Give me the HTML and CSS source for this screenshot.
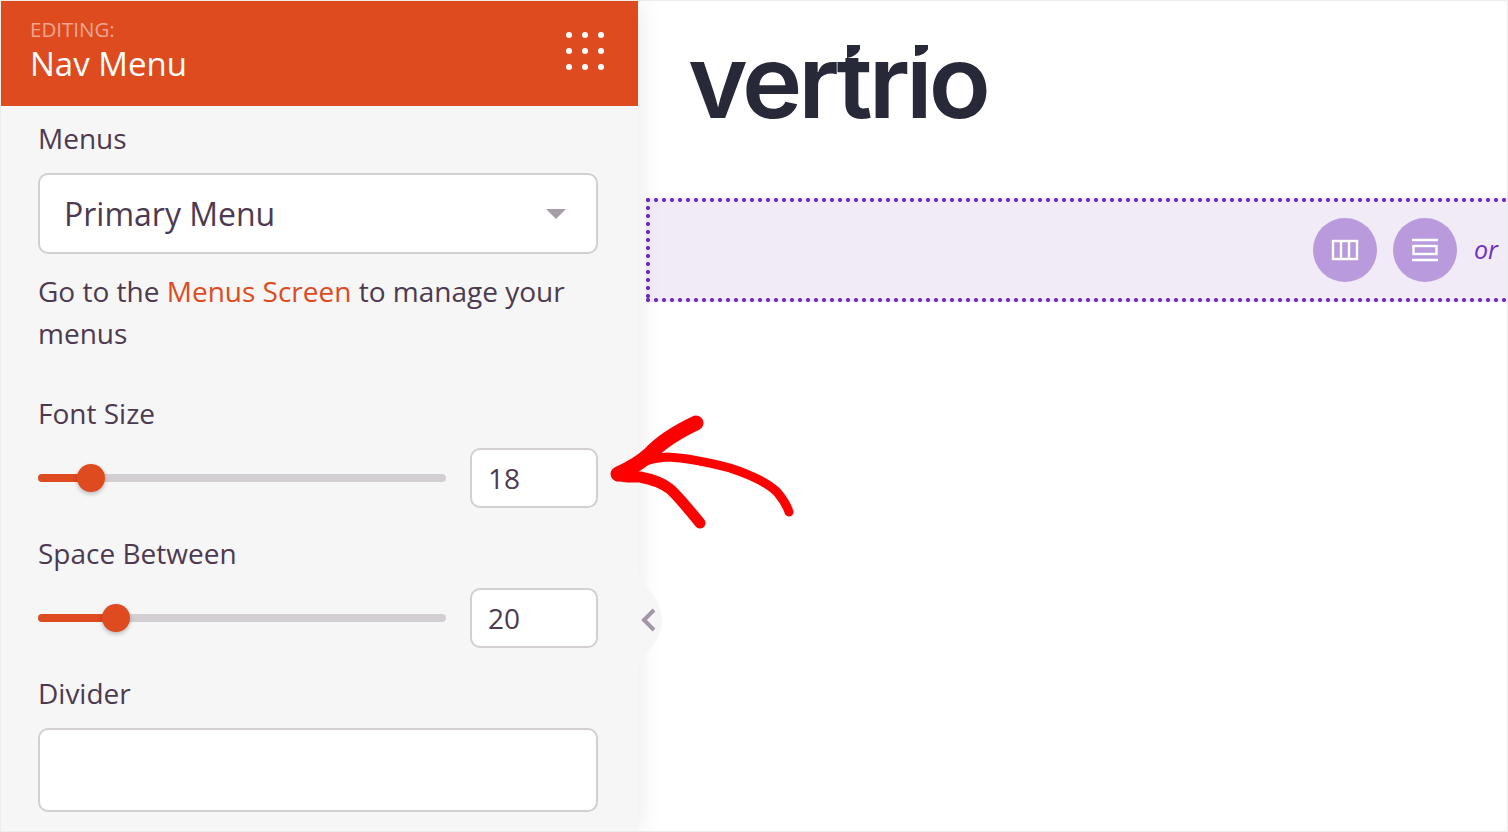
FILE: index.html
```html
<!DOCTYPE html>
<html>
<head>
  <meta charset="UTF-8">
  <title>Nav Menu</title>
  <link rel="stylesheet" href="styles.css">
</head>
<body>
  <div class="page">
    <aside class="sidebar">
      <header class="panel-head">
        <div>
          <div class="panel-eyebrow">EDITING:</div>
          <div class="panel-title">Nav Menu</div>
        </div>
        <svg class="panel-dots" width="38" height="38" viewBox="0 0 38 38" fill="#fff">
          <circle cx="3" cy="3" r="3"/><circle cx="19" cy="3" r="3"/><circle cx="35" cy="3" r="3"/>
          <circle cx="3" cy="19" r="3"/><circle cx="19" cy="19" r="3"/><circle cx="35" cy="19" r="3"/>
          <circle cx="3" cy="35" r="3"/><circle cx="19" cy="35" r="3"/><circle cx="35" cy="35" r="3"/>
        </svg>
      </header>

      <div class="panel-body">
        <div class="field field-first">
          <label>Menus</label>
          <div class="select-box">
            <span>Primary Menu</span>
            <span class="select-caret"></span>
          </div>
          <p class="help">Go to the <a href="#">Menus Screen</a> to manage your menus</p>
        </div>

        <div class="field field-size">
          <label>Font Size</label>
          <div class="slider-row">
            <div class="slider">
              <div class="slider-fill" style="width: 13%"><span class="slider-knob"></span></div>
            </div>
            <div class="num-box">18</div>
          </div>
        </div>

        <div class="field">
          <label>Space Between</label>
          <div class="slider-row">
            <div class="slider">
              <div class="slider-fill" style="width: 19.1%"><span class="slider-knob"></span></div>
            </div>
            <div class="num-box">20</div>
          </div>
        </div>

        <div class="field">
          <label>Divider</label>
          <div class="text-box"></div>
        </div>
      </div>

      <svg class="collapse-tab" width="26" height="104" viewBox="0 0 26 104">
        <path d="M0 0C0 16 24 28 24 52C24 76 0 88 0 104Z" fill="#f6f6f6"/>
        <path d="M16 42L6 52L16 62" fill="none" stroke="#a397a7" stroke-width="4"/>
      </svg>
    </aside>

    <main class="canvas">
      <div class="logo">
        vertrio
        <!-- slanted ticks of the wordmark, over the t and the i -->
        <svg class="logo-ticks" width="100" height="22" viewBox="0 0 100 22">
          <rect x="0" y="0" width="100" height="20" fill="#fff"/>
          <path d="M4 7H17V11C15 16 10 19 4 20Z" fill="#272838"/>
          <path d="M72 7H85V11C83 15 78 18 72 18Z" fill="#272838"/>
        </svg>
      </div>
      <div class="drop-zone">
        <span class="round-btn">
          <svg width="28" height="22" viewBox="0 0 28 22" fill="none" stroke="#fff" stroke-width="2.4">
            <rect x="2" y="2" width="24" height="18"/><path d="M10 2V20M18 2V20"/>
          </svg>
        </span>
        <span class="round-btn">
          <svg width="28" height="24" viewBox="0 0 28 24" fill="none" stroke="#fff" stroke-width="2.4">
            <path d="M1 2H27M1 22H27"/><rect x="2.5" y="8" width="23" height="8"/>
          </svg>
        </span>
        <em class="drop-or">or</em>
      </div>
    </main>

    <svg class="arrow" width="200" height="120" viewBox="0 0 200 120">
      <g fill="none" stroke="#fe0000" stroke-linecap="round" stroke-linejoin="round">
        <path d="M89 13C70 22 54 32 43 44C32 54 20 60 11 64" stroke-width="15"/>
        <path d="M11 63C26 54 42 48 60 47C82 48 104 53 123 58C144 65 160 72 170 82C176 89 180 96 182 102" stroke-width="9"/>
        <path d="M10 65C18 68 26 67 33 67C44 69 54 72 63 79C72 87 84 102 93 113" stroke-width="11"/>
      </g>
    </svg>
  </div>
</body>
</html>
```
FILE: styles.css
```css
* {
  box-sizing: border-box;
}

html, body {
  margin: 0;
  height: 100%;
  overflow: hidden;
  background: #fff;
}

body {
  font-family: "Open Sans", "Noto Sans", sans-serif;
  color: #4d3a50;
}

.page {
  position: relative;
  display: flex;
  height: 832px;
  border: 1px solid #ececec;
  overflow: hidden;
}

.sidebar {
  position: relative;
  z-index: 1;
  flex: 0 0 637px;
  background: #f6f6f6;
  box-shadow: 0 0 24px rgba(0, 0, 0, 0.1);
}

.panel-head {
  display: flex;
  justify-content: space-between;
  align-items: center;
  height: 105px;
  padding: 0 34px 6px 29px;
  background: #de4b1e;
  color: #fff;
}

.panel-eyebrow {
  font-size: 20.5px;
  line-height: 24px;
  color: rgba(255, 255, 255, 0.5);
}

.panel-title {
  margin-top: 1px;
  font-size: 33px;
  font-weight: 500;
  line-height: 43px;
}

.panel-body {
  padding: 0 40px 0 37px;
}

.field {
  margin-top: 30px;
}

.field-first {
  margin-top: 17px;
}

.field-size {
  margin-top: 44px;
}

label {
  display: block;
  height: 32px;
  margin-bottom: 18px;
  font-size: 28px;
  line-height: 30px;
}

.select-box {
  display: flex;
  justify-content: space-between;
  align-items: center;
  height: 81px;
  padding: 0 30px 1px 24px;
  background: #fff;
  border: 2px solid #d3ced2;
  border-radius: 10px;
  font-size: 32px;
}

.select-caret {
  width: 0;
  height: 0;
  margin-top: 2px;
  border-left: 10px solid transparent;
  border-right: 10px solid transparent;
  border-top: 10px solid #a79da9;
}

.help {
  margin: 16px 0 0;
  font-size: 28px;
  line-height: 42px;
}

.help a {
  color: #de4b1e;
  text-decoration: none;
}

.slider-row {
  display: flex;
  justify-content: space-between;
  align-items: center;
  height: 60px;
}

.slider {
  width: 408px;
  height: 8px;
  background: #d3ced2;
  border-radius: 4px;
}

.slider-fill {
  position: relative;
  height: 8px;
  background: #de4b1e;
  border-radius: 4px 0 0 4px;
}

.slider-knob {
  position: absolute;
  right: -14px;
  top: -10px;
  width: 28px;
  height: 28px;
  background: #de4b1e;
  border-radius: 50%;
  box-shadow: 0 2px 4px rgba(0, 0, 0, 0.25);
}

.num-box {
  display: flex;
  align-items: center;
  width: 128px;
  height: 60px;
  padding-left: 16px;
  background: #fff;
  border: 2px solid #d3ced2;
  border-radius: 10px;
  font-size: 28px;
}

.text-box {
  height: 84px;
  background: #fff;
  border: 2px solid #d3ced2;
  border-radius: 10px;
}

.collapse-tab {
  position: absolute;
  left: 637px;
  top: 567px;
}

.canvas {
  flex: 1;
  min-width: 0;
}

.logo {
  position: relative;
  height: 197px;
  padding: 16px 0 0 50px;
  font-family: Inter, "Liberation Sans", sans-serif;
  font-size: 102px;
  font-weight: 600;
  line-height: 128px;
  letter-spacing: -4px;
  color: #272838;
}

.logo-ticks {
  position: absolute;
  left: 205px;
  top: 37px;
}

.drop-zone {
  display: flex;
  justify-content: flex-end;
  align-items: center;
  gap: 16px;
  height: 104px;
  margin-left: 8px;
  margin-right: -4px;
  padding-right: 13px;
  background-color: #f1eaf7;
  background-image:
    radial-gradient(circle, #6d2fc4 1.8px, transparent 2.3px),
    radial-gradient(circle, #6d2fc4 1.8px, transparent 2.3px),
    radial-gradient(circle, #6d2fc4 1.8px, transparent 2.3px);
  background-size: 8px 4px, 8px 4px, 4px 8px;
  background-position: -2px 0, -2px 100%, 0 -2px;
  background-repeat: repeat-x, repeat-x, repeat-y;
}

.round-btn {
  display: flex;
  justify-content: center;
  align-items: center;
  width: 64px;
  height: 64px;
  background: #b99bdd;
  border-radius: 50%;
}

.drop-or {
  margin-left: 1px;
  margin-bottom: 3px;
  font-size: 25px;
  color: #6d2fc4;
}

.arrow {
  position: absolute;
  z-index: 2;
  left: 606px;
  top: 409px;
}
```
